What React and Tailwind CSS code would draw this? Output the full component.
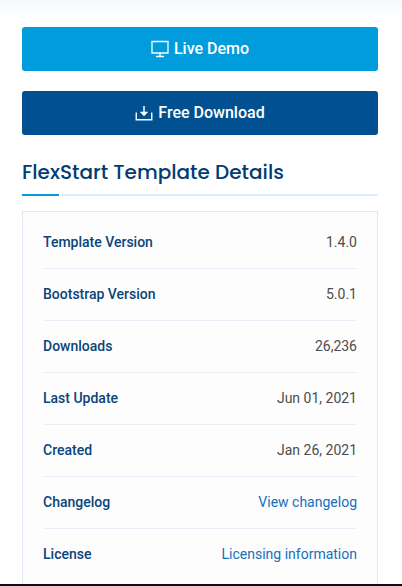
import React from "react";

const details = [
  { label: "Template Version", value: "1.4.0" },
  { label: "Bootstrap Version", value: "5.0.1" },
  { label: "Downloads", value: "26,236" },
  { label: "Last Update", value: "Jun 01, 2021" },
  { label: "Created", value: "Jan 26, 2021" },
  { label: "Changelog", value: "View changelog", href: "#changelog" },
  { label: "License", value: "Licensing information", href: "#license" },
];

function MonitorIcon() {
  return (
    <svg className="size-[18px]" viewBox="0 0 18 18" fill="none" stroke="currentColor" aria-hidden="true">
      <path d="M1 1.5h16v11.5H1z" strokeWidth="1.3" />
      <path d="M9 13v3.5M5 16.5h8" strokeWidth="1.4" />
    </svg>
  );
}

function DownloadIcon() {
  return (
    <svg className="size-[18px]" viewBox="0 0 18 18" fill="none" stroke="currentColor" aria-hidden="true">
      <path d="M1.25 8.5v7.25h15.5V8.5" strokeWidth="1.4" />
      <path d="M9 2v8" strokeWidth="1.5" />
      <path d="M4.75 7.75h8.5L9 12.25z" fill="currentColor" stroke="none" />
    </svg>
  );
}

function ActionLink({ href, className, icon, children }) {
  return (
    <a
      href={href}
      className={`flex h-11 items-center justify-center gap-[5px] rounded-[3px] text-base font-medium text-white ${className}`}
    >
      {icon}
      <span>{children}</span>
    </a>
  );
}

export default function App() {
  return (
    <div className="bg-white font-['Roboto',sans-serif]">
      <main>
        <div className="h-4 bg-linear-to-b from-[#f5f7fb] to-white" />
        <div className="px-[22px] pr-6 pt-[11px]">
          <div className="flex flex-col gap-5">
            <ActionLink href="#demo" className="bg-[#009cdc]" icon={<MonitorIcon />}>
              Live Demo
            </ActionLink>
            <ActionLink href="#download" className="bg-[#005092]" icon={<DownloadIcon />}>
              Free Download
            </ActionLink>
          </div>
          <h2 className="mt-[23px] font-['Poppins','Inter',sans-serif] text-xl leading-7 font-medium whitespace-nowrap text-[#013c73]">
            FlexStart Template Details
          </h2>
          <div className="mt-2 flex h-0.5 gap-[3px]">
            <span className="w-[37px] bg-[#009cdc]" />
            <span className="flex-1 bg-[#dceefd]" />
          </div>
          <dl className="mt-[15px] border border-b-0 border-[#dfe8f4] bg-[#fdfdfd] px-5 pt-[5px] pb-[3px] text-sm">
            {details.map(({ label, value, href }) => (
              <div
                key={label}
                className="flex h-[52px] items-center justify-between border-b border-[#e9f0fa] pb-0.5 last:border-transparent"
              >
                <dt className="font-medium text-[#0b4479]">{label}</dt>
                <dd className="text-[#4c4c4c]">
                  {href ? (
                    <a href={href} className="text-[#1570bb]">
                      {value}
                    </a>
                  ) : (
                    value
                  )}
                </dd>
              </div>
            ))}
          </dl>
        </div>
      </main>
      <footer className="h-0.5 bg-[#0b0f13]" />
    </div>
  );
}
